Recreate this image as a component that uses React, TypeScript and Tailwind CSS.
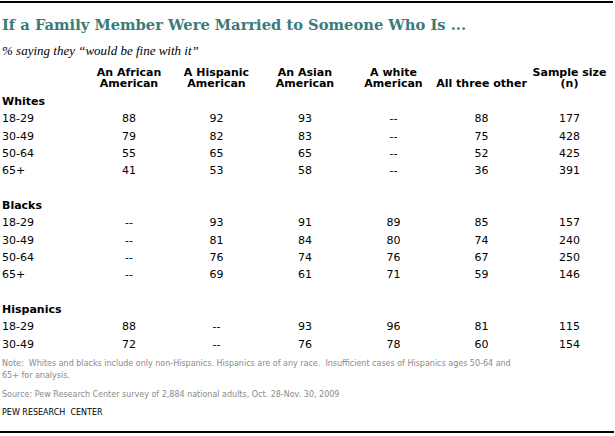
import React from 'react';

type Row = { label: string; values: string[] };
type Group = { name: string; rows: Row[] };

const columns = [
  ['An African', 'American'],
  ['A Hispanic', 'American'],
  ['An Asian', 'American'],
  ['A white', 'American'],
  ['', 'All three other'],
  ['Sample size', '(n)'],
];

const groups: Group[] = [
  {
    name: 'Whites',
    rows: [
      { label: '18-29', values: ['88', '92', '93', '--', '88', '177'] },
      { label: '30-49', values: ['79', '82', '83', '--', '75', '428'] },
      { label: '50-64', values: ['55', '65', '65', '--', '52', '425'] },
      { label: '65+', values: ['41', '53', '58', '--', '36', '391'] },
    ],
  },
  {
    name: 'Blacks',
    rows: [
      { label: '18-29', values: ['--', '93', '91', '89', '85', '157'] },
      { label: '30-49', values: ['--', '81', '84', '80', '74', '240'] },
      { label: '50-64', values: ['--', '76', '74', '76', '67', '250'] },
      { label: '65+', values: ['--', '69', '61', '71', '59', '146'] },
    ],
  },
  {
    name: 'Hispanics',
    rows: [
      { label: '18-29', values: ['88', '--', '93', '96', '81', '115'] },
      { label: '30-49', values: ['72', '--', '76', '78', '60', '154'] },
    ],
  },
];

const grid = 'grid grid-cols-[83px_88px_87px_90px_87px_89px_87px]';

export default function App() {
  return (
    <div className="w-[615px] h-[436px] bg-white text-black font-['DejaVu_Sans',Verdana,sans-serif] overflow-hidden">
      <div className="mt-[1px] mr-[2px] h-[2px] bg-black" />

      <h1 className="mt-[12px] pl-[2px] text-[14.7px] leading-[20px] font-bold text-[#3a7b79] font-['DejaVu_Serif',Georgia,serif] whitespace-nowrap">
        If a Family Member Were Married to Someone Who Is ...
      </h1>
      <p className="mt-[8px] pl-[2px] text-[13px] leading-[16px] italic font-['Liberation_Serif',Georgia,serif]">
        % saying they “would be fine with it”
      </p>

      <div className="pl-[2px]">
        <div className={`${grid} mt-[8px] items-end text-[11px] leading-[11px] font-bold`}>
          <div />
          {columns.map((c, i) => (
            <div key={i} className="flex flex-col items-center whitespace-nowrap">
              {c[0] && <span>{c[0]}</span>}
              <span>{c[1]}</span>
            </div>
          ))}
        </div>

        <div className="mt-[4px] text-[11px]">
          {groups.map((g, gi) => (
            <div key={g.name} className={gi > 0 ? 'mt-[17.35px]' : ''}>
              <div className="h-[17.35px] leading-[17.35px] font-bold">{g.name}</div>
              {g.rows.map((r) => (
                <div key={r.label} className={`${grid} h-[17.35px] leading-[17.35px]`}>
                  <div>{r.label}</div>
                  {r.values.map((v, i) => (
                    <div key={i} className="text-center">{v}</div>
                  ))}
                </div>
              ))}
            </div>
          ))}
        </div>

        <div className="mt-[5px] text-[8px] leading-[12px] text-[#8a8a8a] whitespace-nowrap">
          <p>
            Note:&nbsp; Whites and blacks include only non-Hispanics. Hispanics are of any race.&nbsp; Insufficient cases of Hispanics ages 50-64 and
            <br />
            65+ for analysis.
          </p>
          <p className="mt-[7px]">
            Source: Pew Research Center survey of 2,884 national adults, Oct. 28-Nov. 30, 2009
          </p>
        </div>
        <p className="mt-[6px] text-[8px] leading-[12px] text-black">PEW RESEARCH&nbsp; CENTER</p>
      </div>

      <div className="mt-[12px] mr-[1px] h-[2px] bg-black" />
    </div>
  );
}
